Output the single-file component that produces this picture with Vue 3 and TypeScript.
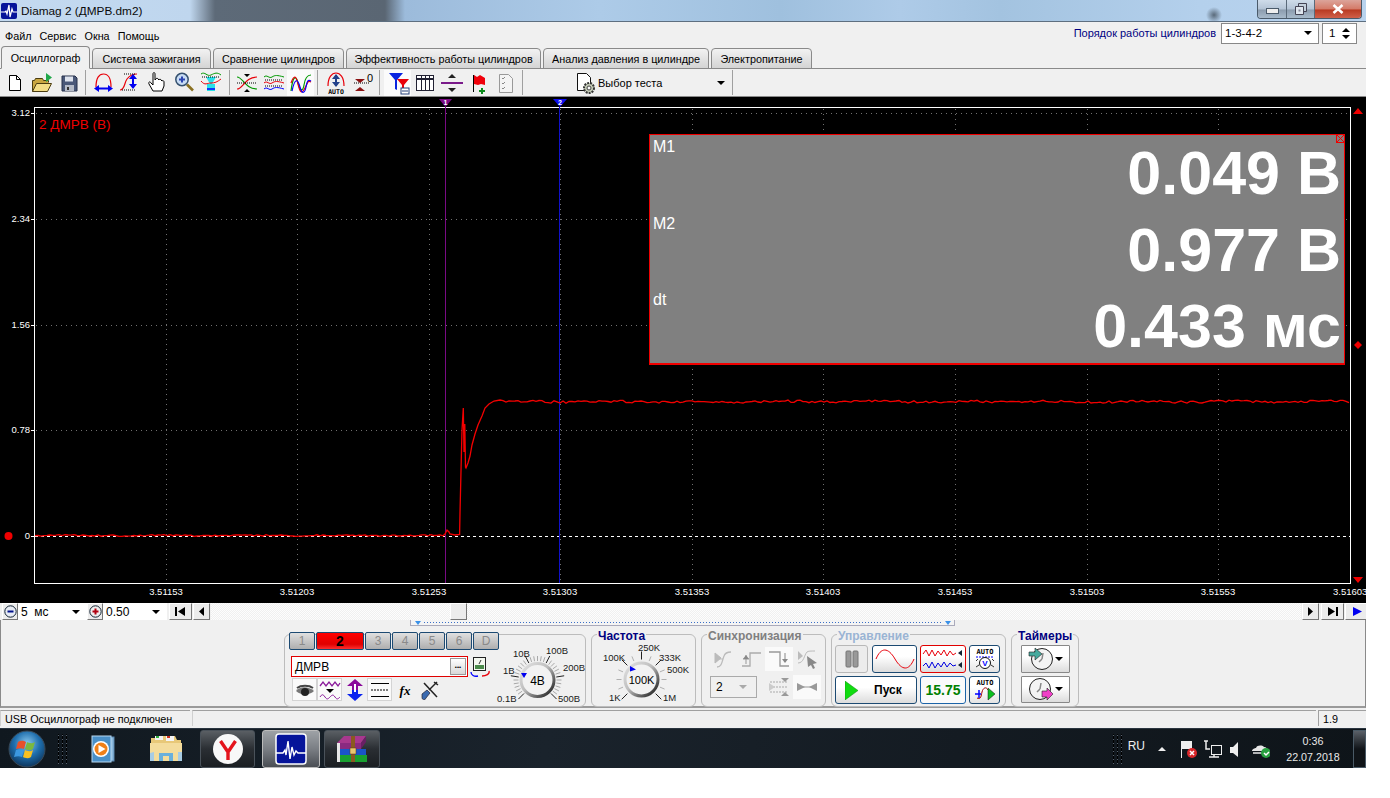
<script setup lang="ts">
import { computed } from 'vue'

const tabs = [
  { label: 'Осциллограф', width: 89, active: true },
  { label: 'Система зажигания', width: 119 },
  { label: 'Сравнение цилиндров', width: 131 },
  { label: 'Эффективность работы цилиндров', width: 195 },
  { label: 'Анализ давления в цилиндре', width: 166 },
  { label: 'Электропитание', width: 101 }
]

const toolGroups = [
  { start: 1, end: 0, items: ['newDoc', 'open', 'save'] },
  { start: 3, end: 2, items: ['arcWidth', 'sWave', 'hand', 'zoom', 'fit'] },
  { start: 3, end: 0, items: ['cross', 'stack', 'overlay'] },
  { start: 4, end: 0, items: ['auto', 'zero'] },
  { start: 4, end: 0, items: ['filter', 'table', 'split', 'flag', 'note'] }
]
const activeTools = ['overlay', 'filter']

const channels = ['1', '2', '3', '4', '5', '6', 'D']
const channelTools = ['eye', 'waveMenu', 'updown', 'lines', 'fx', 'tools']

const yLabels = [
  { y: 113, text: '3.12' },
  { y: 219, text: '2.34' },
  { y: 325, text: '1.56' },
  { y: 430, text: '0.78' },
  { y: 536, text: '0' }
]
const xLabels = [166, 297, 429, 560, 692, 823, 955, 1087, 1218].map((x, i) => ({
  x,
  text: (3.51153 + i * 0.0005).toFixed(5)
}))

const readings = [
  { name: 'M1', value: '0.049 В' },
  { name: 'M2', value: '0.977 В' },
  { name: 'dt', value: '0.433 мс' }
]

const rnd = (i: number) => {
  const s = Math.sin(i * 12.9898) * 43758.5453
  return s - Math.floor(s)
}
const noise = (i: number) => (rnd(i) - 0.5) * 2.4 + Math.sin(i * 0.07) * 0.4

const signal = computed(() => {
  const pts: string[] = []
  for (let x = 35; x < 444; x += 3) pts.push(`${x},${(535.4 + noise(x) * 0.6).toFixed(1)}`)
  const rise = [
    [445, 534], [447, 530], [449, 532], [450, 534], [455, 535], [459.6, 534.5], [460, 513], [461, 471],
    [462, 430], [463.3, 408], [464, 452], [464.8, 424], [465.5, 467], [466, 468], [468, 463], [470, 456],
    [472, 445], [475, 434], [478, 425], [482, 416], [485, 408], [489, 404], [494, 401], [500, 400]
  ]
  rise.forEach(p => pts.push(p.join(',')))
  for (let x = 503; x <= 1350; x += 3) pts.push(`${x},${(401.6 + noise(x)).toFixed(1)}`)
  return pts.join(' ')
})

interface Tick { x1: number; y1: number; x2: number; y2: number; major: boolean }

function ticks(cx: number, cy: number, count: number, r1: number, r2: number, majors: number[]): Tick[] {
  const out: Tick[] = []
  for (let i = 0; i < count; i++) {
    const a = ((-225 + (270 * i) / (count - 1)) * Math.PI) / 180
    const major = majors.includes(i)
    const r = major ? r2 + 3 : r2
    out.push({
      x1: cx + Math.cos(a) * r1,
      y1: cy + Math.sin(a) * r1,
      x2: cx + Math.cos(a) * r,
      y2: cy + Math.sin(a) * r,
      major
    })
  }
  return out
}

const voltTicks = ticks(537.5, 680, 31, 19, 24, [0, 6, 12, 18, 24, 30])
const freqTicks = ticks(641.5, 680.5, 13, 20, 25, [0, 4, 6, 8, 12])

const voltLabels = [
  { x: 497, y: 702, t: '0.1В' }, { x: 503, y: 674, t: '1В' }, { x: 513, y: 657, t: '10В' },
  { x: 546, y: 654, t: '100В' }, { x: 563, y: 671, t: '200В' }, { x: 558, y: 702, t: '500В' }
]
const freqLabels = [
  { x: 609, y: 702, t: '1K' }, { x: 603, y: 662, t: '100K' }, { x: 638, y: 652, t: '250K' },
  { x: 659, y: 662, t: '333K' }, { x: 667, y: 674, t: '500K' }, { x: 663, y: 702, t: '1M' }
]

const syncIcons = ['syncRise', 'syncStep', 'syncFall', 'syncCursor']

const red = '#e8000a'
const blue = '#0000f0'
const vArrow = (x: number, y1: number, y2: number, c: string) =>
  `<path d="M${x} ${y1}v${y2 - y1}" stroke="${c}" stroke-width="2"/><path d="M${x - 4} ${y1 + 4}l4-5 4 5zM${x - 4} ${y2 - 4}l4 5 4-5z" fill="${c}"/>`

const icons: Record<string, string> = {
  newDoc: '<path d="M6.500 4.500h7l4 4v11h-11z" fill="#fff" stroke="#000"/><path d="M13.500 4.500v4h4" fill="none" stroke="#000"/>',
  open: '<path d="M2.500 20.500v-11h2l1-2h7l1 2h5v2" fill="#c9a640" stroke="#4a3c10"/><path d="M2.500 20.500l4-8h15l-4 8z" fill="#f3dd86" stroke="#4a3c10"/><path d="M16 2l6 4.500-6 4.500z" fill="#21a84a"/>',
  save: '<path d="M5 5h13l2 2v13H5z" fill="#4a5878" stroke="#26304a"/><rect x="8" y="5.500" width="8" height="5" fill="#dfe4ee"/><rect x="8" y="14" width="9" height="6" fill="#b6bcc8"/><rect x="10" y="16" width="2" height="3" fill="#333"/>',
  arcWidth: `<path d="M5 16C5 7 8 3 12.500 3S20 7 20 16" fill="none" stroke="${red}" stroke-width="1.200"/><path d="M6 17.500h13" stroke="${blue}" stroke-width="2"/><path d="M8 14l-5 3.500 5 3.500zM17 14l5 3.500-5 3.500z" fill="${blue}"/>`,
  sWave: `<path d="M2 19c5 0 4-7 7-11 3-4 6-5 10-5" fill="none" stroke="${red}" stroke-width="1.200"/><path d="M6 3h12M4 19h14" stroke="#000" stroke-dasharray="1 1"/>${vArrow(15, 4, 17, blue)}`,
  hand: '<path d="M8 20l-4-7c-1-2 1-3 2-1l2 2V3c0-2 2-2 2 0v6l1-1c0-1 2-1 2 0l1 1c0-1 2-1 2 0l1 1c1-1 2 0 2 1v4l-2 5z" fill="#fff" stroke="#000"/>',
  zoom: '<circle cx="10" cy="8.500" r="6.200" fill="#c8dcf4" stroke="#34506e" stroke-width="1.500"/><path d="M10 5.500v6M7 8.500h6" stroke="#2a44b0" stroke-width="2"/><path d="M15 13.500l6 6" stroke="#8a7020" stroke-width="2.600"/>',
  fit: '<path d="M7 6l4 7h2l4-7z" fill="#29e0e8"/><rect x="8" y="13" width="8" height="7" fill="#29e0e8"/><path d="M2 3c4-3 6 3 10 1s6-3 10 0" fill="none" stroke="#090"/><path d="M2 10c4 5 6 2 10 2s6-1 10-4" fill="none" stroke="#e8000a"/><path d="M3 6h18" stroke="#000" stroke-dasharray="1 1"/><path d="M8 18h8" stroke="#00f" stroke-width="1.500"/>',
  cross: '<path d="M2 6c6 0 8 12 20 12" fill="none" stroke="#090" stroke-width="1.200"/><path d="M2 18C8 18 10 6 22 6" fill="none" stroke="#e8000a" stroke-width="1.200"/><path d="M2 12h20" stroke="#000" stroke-dasharray="1 1"/><path d="M9 3h6l-3 3zM9 21h6l-3-3z" fill="#000"/>',
  stack: '<path d="M2 6c3-3 5 2 8 0s5-2 12 0" fill="none" stroke="#090"/><path d="M2 12c3-3 5 2 8 0s5-2 12 0" fill="none" stroke="#e8000a"/><path d="M2 18c3-3 5 2 8 0s5-2 12 0" fill="none" stroke="#00f"/><path d="M3 9h18M3 15h18" stroke="#000" stroke-dasharray="1 1"/>',
  overlay: '<path d="M2 20C4 4 7 4 9 12s5 9 6 2 3-10 7-10" fill="none" stroke="#090" stroke-width="1.200"/><path d="M2 12c3-8 5-8 7 1s4 10 7 4 3-8 6-6" fill="none" stroke="#e8000a" stroke-width="1.200"/><path d="M3 20C6 6 9 8 11 16s5 6 6 0 2-8 5-6" fill="none" stroke="#00f" stroke-width="1.200"/>',
  auto: `<path d="M4 15C4 6 8 2 12 2s8 4 8 13" fill="none" stroke="${red}" stroke-width="1.200"/>${vArrow(12, 4, 15, '#22408a')}<text x="12" y="23" font-size="6.500" font-weight="700" text-anchor="middle" font-family="DejaVu Sans Mono, monospace">AUTO</text>`,
  zero: '<path d="M3 12h16" stroke="#000" stroke-dasharray="1 1"/><path d="M4 8h10l-5 4zM4 20h10l-5-4z" fill="#8a1010"/><text x="19" y="11" font-size="11" text-anchor="middle" font-family="Liberation Sans, sans-serif">0</text>',
  filter: '<path d="M3 2h14l-6 7v10l-2-1V9z" fill="#0a24e0"/><path d="M11 8h12l-5 6v7l-2-1v-6z" fill="#e8000a"/><rect x="15" y="17" width="8" height="6" fill="#fff" stroke="#24407a"/><path d="M16 20h6" stroke="#24407a"/>',
  table: '<rect x="3.500" y="4.500" width="17" height="15" fill="#fff" stroke="#223"/><path d="M3.500 8h17" stroke="#223" stroke-width="2"/><path d="M8.500 5v14M12.500 5v14M16.500 5v14" stroke="#223"/>',
  split: '<path d="M1 12h22" stroke="#7a1a8a" stroke-width="2"/><path d="M8 7h8l-4-4zM8 17h8l-4 4z" fill="#222"/>',
  flag: '<path d="M6.500 4v17" stroke="#000"/><path d="M7 4l3 2 3-2 5 3v7l-4-1-3 1-4-1z" fill="#f0000a"/><path d="M15 17v6M12 20h6" stroke="#0a8a1a" stroke-width="2"/>',
  note: '<path d="M5.500 3.500h9l4 4v14h-13z" fill="#f4f4f4" stroke="#999"/><path d="M8 7l1 1 2-2M8 12l1 1 2-2M8 17l1 1 2-2" stroke="#888" fill="none"/>',
  testDoc: '<path d="M3.500 2.500h9l4 4v13h-13z" fill="#fff" stroke="#111"/><circle cx="15" cy="17" r="5" fill="#c5ccb8" stroke="#333" stroke-dasharray="2 1" stroke-width="2"/><circle cx="15" cy="17" r="2" fill="#fff" stroke="#444"/>',
  scale: '<rect x="3.500" y="2.500" width="12" height="13" fill="#f4f8f0" stroke="#222"/><rect x="5" y="10" width="9" height="4" fill="#4a8a4a"/><path d="M9 9l2-4" stroke="#333"/><path d="M1 17c0 3 3 5 7 4" fill="none" stroke="#00f" stroke-width="1.300"/><path d="M19 16c1 3-3 5-7 5" fill="none" stroke="#e8000a" stroke-width="1.300"/>',
  eye: '<path d="M3 13c4-5 12-5 18 0-4 4-13 5-18 0z" fill="#777"/><circle cx="12" cy="14" r="4" fill="#222"/><path d="M4 10c4-3 12-3 16 0" stroke="#444" stroke-width="2" fill="none"/>',
  waveMenu: '<path d="M2 8l3-4 3 4 3-4 3 4 3-4 3 4 2-3" fill="none" stroke="#8a1a9a" stroke-width="1.300"/><path d="M2 19c2-3 3-3 5 0s3 2 5 0 3-3 5 0 3 2 5 0" fill="none" stroke="#8a1a9a"/><path d="M8 11h8l-4 4z" fill="#000"/>',
  updown: '<path d="M12 1l8 7h-5v4H9V8H4z" fill="#8a0a9a"/><path d="M12 23l8-7h-5v-4H9v4H4z" fill="#0a24f0"/><path d="M11 6h2v8h-2z" fill="#fff"/>',
  lines: '<path d="M3 5.500h18M3 18.500h18" stroke="#000" stroke-width="1.200"/><path d="M3 12h18" stroke="#000" stroke-dasharray="2 1"/>',
  fx: '<text x="12" y="17" font-size="13" font-weight="700" font-style="italic" text-anchor="middle" font-family="Liberation Serif, serif">fx</text>',
  tools: '<path d="M6 5l13 14" stroke="#222" stroke-width="1.500"/><path d="M19 4l-8 8" stroke="#222" stroke-width="1.500"/><path d="M4 16l5-4 3 3-4 5a2 2 0 0 1-4-1z" fill="#3a6ab0" stroke="#223" stroke-width=".7"/><path d="M16 4l4 3" stroke="#222" stroke-width="1.500"/>',
  syncRise: '<path d="M4 6l6 5-6 5zM4 12h8" fill="#bbb" stroke="#bbb"/><path d="M6 20c5 0 5-6 7-11 1-3 4-4 7-4" fill="none" stroke="#bbb" stroke-width="1.300"/>',
  syncStep: '<path d="M3 19h8V6h11" fill="none" stroke="#aaa" stroke-width="1.300"/><path d="M7 8v9M4 12h6" stroke="#999"/><path d="M4 12l3-4 3 4z" fill="#888"/>',
  syncFall: '<path d="M2 5h11v14h9" fill="none" stroke="#999" stroke-width="1.300"/><path d="M18 6v9" stroke="#888"/><path d="M15 12l3 4 3-4z" fill="#888"/>',
  syncCursor: '<path d="M3 16c6 0 6-8 9-11 1-1 4-1 8-1" fill="none" stroke="#bbb"/><path d="M3 4l5 5-5 4z" fill="#bbb"/><path d="M12 9l10 7-4 1 2 4-2 1-2-4-3 2z" fill="#888"/>',
  syncIn: '<path d="M3 7l18 0M3 12h18M3 17h18" stroke="#aaa" stroke-dasharray="2 1"/><path d="M14 3h8l-4 4zM14 21h8l-4-4z" fill="#999"/><path d="M2 8l6 4-6 4z" fill="#ccc"/>',
  syncOut: '<path d="M2 8l8 4-8 4zM22 8l-8 4 8 4z" fill="#999"/><path d="M2 12h20" stroke="#999"/>',
  pause: '<rect x="6" y="4" width="5" height="16" rx="1" fill="#999" stroke="#777"/><rect x="13" y="4" width="5" height="16" rx="1" fill="#999" stroke="#777"/>',
  autoV: '<text x="12" y="7" font-size="7" font-weight="700" text-anchor="middle" font-family="DejaVu Sans Mono, monospace">AUTO</text><path d="M3 10h18" stroke="#00f" stroke-dasharray="2 1"/><circle cx="12" cy="16" r="5.500" fill="#fff" stroke="#111"/><text x="12" y="19" font-size="8" fill="#00f" font-weight="700" text-anchor="middle" font-family="Liberation Sans, sans-serif">V</text><path d="M3 14l2-2M21 14l-2-2M3 20l3-2M21 20l-3-2" stroke="#333"/>',
  autoRun: '<text x="12" y="7" font-size="7" font-weight="700" text-anchor="middle" font-family="DejaVu Sans Mono, monospace">AUTO</text><path d="M2 16h6M6 12v8" stroke="#00f" stroke-width="1.500"/><path d="M4 20c4 2 4-2 5-6s4-6 6-2" fill="none" stroke="#a00000"/><path d="M15 10l7 6-7 6z" fill="#0cc020" stroke="#111" stroke-width=".5"/>',
  timerIn: '<circle cx="13" cy="12" r="10.500" fill="#f4f4f4" stroke="#222"/><path d="M13 12l1-6M13 12l-3 3" stroke="#888" stroke-width="1.500"/><path d="M0 5h6V1l7 6-7 6V9H0z" fill="#46aa9e" stroke="#222" stroke-width=".6"/>',
  timerOut: '<circle cx="11" cy="12" r="10.500" fill="#f4f4f4" stroke="#222"/><path d="M11 12l1-6M11 12l-3 3" stroke="#888" stroke-width="1.500"/><path d="M13 14h5v-3l6 6-6 6v-3h-5z" fill="#f040c8" stroke="#222" stroke-width=".6"/>'
}

const trayIcons = {
  flag: '<path d="M3.500 3v17" stroke="#eee"/><path d="M4 3h10v8H4z" fill="#eee"/><circle cx="14" cy="15" r="5" fill="#d8262a"/><path d="M12 13l4 4M16 13l-4 4" stroke="#fff" stroke-width="1.500"/>',
  net: '<rect x="9.500" y="7.500" width="10" height="9" fill="none" stroke="#eee"/><path d="M4 3v8h4M2 3h4M7 19h10M12 16v3" stroke="#eee" stroke-width="1.500" fill="none"/>',
  vol: '<path d="M4 9h3l5-5v15l-5-4H4z" fill="#eee"/>',
  cloud: '<path d="M2 13c0-2 3-3 4-3 1-3 6-3 8-1 2 0 4 2 4 4H2z" fill="#e8e8e8"/><path d="M3 15h13" stroke="#e8e8e8" stroke-width="1.500"/><circle cx="16" cy="15" r="5" fill="#28a040"/><path d="M14 15l2 2 3-3" stroke="#fff" fill="none" stroke-width="1.500"/>'
}
</script>

<template>
  <div class="window">
    <header class="titlebar">
      <svg class="app-icon" viewBox="0 0 16 16">
        <rect width="16" height="16" rx="2" fill="#06149a" />
        <path d="M0 9h4l1-1 1 3 2-9 1 12 2-8 1 3h4" fill="none" stroke="#fff" stroke-width="1.200" />
      </svg>
      <span class="title">Diamag 2 (ДМРВ.dm2)</span>
      <div class="win-btns">
        <span class="win-btn win-min"><i></i></span>
        <span class="win-btn win-max">
          <svg width="12" height="12" viewBox="0 0 12 12">
            <path d="M3.500.5h8v8h-8z" fill="#c4d0dc" stroke="#445" />
            <path d="M.5 3.500h8v8h-8z" fill="#dfe6ee" stroke="#445" />
            <path d="M3.500 6.500h2v2h-2z" fill="#889" />
          </svg>
        </span>
        <span class="win-btn win-close">
          <svg width="14" height="10" viewBox="0 0 14 10">
            <path d="M2.500 1l9 8M11.500 1l-9 8" stroke="#fff" stroke-width="2.600" />
          </svg>
        </span>
      </div>
    </header>

    <div class="menubar">
      <nav class="menu">
        <span>Файл</span>
        <span>Сервис</span>
        <span>Окна</span>
        <span>Помощь</span>
      </nav>
      <div class="order">
        <span class="order-label">Порядок работы цилиндров</span>
        <span class="order-combo">1-3-4-2<i class="arrow"></i></span>
        <span class="order-spin">1
          <span class="spin-arrows"><i class="up"></i><i class="arrow"></i></span>
        </span>
      </div>
    </div>

    <div class="tabs">
      <span
        v-for="tab in tabs"
        :key="tab.label"
        class="tab"
        :class="{ 'tab--active': tab.active }"
        :style="{ width: tab.width + 'px' }"
      >{{ tab.label }}</span>
    </div>

    <div class="toolbar">
      <template v-for="group in toolGroups" :key="group.items[0]">
        <div class="tool-group" :style="{ paddingLeft: group.start + 'px', paddingRight: group.end + 'px' }">
          <span
            v-for="name in group.items"
            :key="name"
            class="tool"
            :class="{ 'tool--on': activeTools.includes(name) }"
          >
            <svg class="ico" viewBox="0 0 24 24" v-html="icons[name]"></svg>
          </span>
        </div>
        <i class="sep"></i>
      </template>
      <div class="test-select">
        <svg class="ico" viewBox="0 0 24 24" v-html="icons.testDoc"></svg>
        <span>Выбор теста</span>
        <i class="arrow"></i>
      </div>
      <i class="sep"></i>
    </div>

    <section class="scope">
      <svg class="plot" viewBox="0 97 1366 506" width="1366" height="506">
        <rect x="34.500" y="107.500" width="1316" height="476" fill="none" stroke="#fff" />
        <g stroke="#707070" stroke-dasharray="1 4" shape-rendering="crispEdges">
          <line v-for="l in yLabels.slice(0, 4)" :key="l.y" x1="36" x2="1350" :y1="l.y" :y2="l.y" />
          <line v-for="l in xLabels" :key="l.x" :x1="l.x" :x2="l.x" y1="109" y2="583" />
        </g>
        <g stroke="#fff" shape-rendering="crispEdges">
          <line v-for="l in yLabels" :key="l.y" x1="31" x2="34" :y1="l.y" :y2="l.y" />
        </g>
        <line x1="35" x2="1350" y1="536.500" y2="536.500" stroke="#fff" stroke-dasharray="3 3" />
        <text
          v-for="l in yLabels"
          :key="l.text"
          class="axis"
          x="30"
          :y="l.y + 3"
          text-anchor="end"
        >{{ l.text }}</text>
        <text v-for="l in xLabels" :key="l.text" class="axis" :x="l.x" y="595" text-anchor="middle">{{ l.text }}</text>
        <text class="axis" x="1333" y="595">3.51603</text>
        <text class="channel-name" x="39" y="129">2 ДМРВ (В)</text>

        <line x1="445.500" x2="445.500" y1="107" y2="583" stroke="#7a0a84" />
        <line x1="559.500" x2="559.500" y1="107" y2="583" stroke="#1010c8" />
        <path d="M439 99h13l-6.500 8z" fill="#7a0a84" />
        <path d="M553 99h14l-7 8z" fill="#1010f0" />
        <text class="marker" x="445.500" y="105" text-anchor="middle">1</text>
        <text class="marker" x="560" y="105" text-anchor="middle">2</text>

        <polyline :points="signal" fill="none" stroke="#f40000" stroke-width="1.300" />

        <circle cx="8.500" cy="536" r="4" fill="#f00000" />
        <path d="M1353 114l5-6 5 6zM1353 577l5 6 5-6zM1354 345l4-4 4 4-4 4z" fill="#f00000" />
      </svg>

      <div class="readout">
        <i class="readout-close">
          <svg width="7" height="7" viewBox="0 0 7 7">
            <path d="M0 0l7 7M7 0L0 7" stroke="#f00000" />
          </svg>
        </i>
        <div v-for="r in readings" :key="r.name" class="reading">
          <span class="reading-name">{{ r.name }}</span>
          <span class="reading-value">{{ r.value }}</span>
        </div>
      </div>
    </section>

    <div class="scrollrow">
      <button class="sbtn zoom-btn"><svg width="13" height="13" viewBox="0 0 13 13"><circle cx="6.500" cy="6.500" r="5.700" fill="#e8ecf4" stroke="#123" /><path d="M3.500 6.500h6" stroke="#00108a" stroke-width="2" /></svg></button>
      <span class="combo combo--time">5&nbsp; мс<i class="arrow"></i></span>
      <button class="sbtn zoom-btn"><svg width="13" height="13" viewBox="0 0 13 13"><circle cx="6.500" cy="6.500" r="5.700" fill="#eee" stroke="#123" /><path d="M3.500 6.500h6M6.500 3.500v6" stroke="#b00010" stroke-width="2" /></svg></button>
      <span class="combo combo--scale">0.50<i class="arrow"></i></span>
      <button class="sbtn nav-wide"><svg width="11" height="9" viewBox="0 0 11 9"><path d="M0 0h2v9H0zM10 0v9L3 4.500z" /></svg></button>
      <button class="sbtn nav-thin"><svg width="5" height="9" viewBox="0 0 5 9"><path d="M5 0v9L0 4.500z" /></svg></button>
      <div class="track"><span class="thumb"></span></div>
      <button class="sbtn nav-thin"><svg width="5" height="9" viewBox="0 0 5 9"><path d="M0 0v9l5-4.500z" /></svg></button>
      <button class="sbtn nav-wide"><svg width="11" height="9" viewBox="0 0 11 9"><path d="M11 0H9v9h2zM1 0v9l7-4.500z" /></svg></button>
      <button class="sbtn nav-play"><svg width="9" height="9" viewBox="0 0 9 9"><path d="M0 0v9l9-4.500z" fill="#0000f0" /></svg></button>
    </div>

    <div class="controls">
      <div class="strip"><i class="strip-mark"></i><span class="strip-dots"></span><i class="strip-mark"></i></div>
      <div class="groups">
        <div class="group group--channel">
          <div class="channel-left">
            <div class="channel-btns">
              <span
                v-for="c in channels"
                :key="c"
                class="channel"
                :class="{ 'channel--on': c === '2' }"
              >{{ c }}</span>
            </div>
            <div class="name-row">
              <div class="name-field">
                <span>ДМРВ</span>
                <button class="dots">•••</button>
              </div>
              <svg class="ico name-ico" viewBox="0 0 24 24" v-html="icons.scale"></svg>
            </div>
            <div class="channel-tools">
              <span
                v-for="t in channelTools"
                :key="t"
                class="ctool"
                :class="{ 'ctool--on': ['eye', 'waveMenu', 'lines'].includes(t) }"
              >
                <svg class="ico" viewBox="0 0 24 24" v-html="icons[t]"></svg>
              </span>
            </div>
          </div>
          <svg class="knob knob--volt" viewBox="503 644 82 63" width="82" height="63">
            <defs>
              <linearGradient id="ring" x1="0" y1="0" x2="1" y2="1">
                <stop offset="0" stop-color="#e4e4e4" />
                <stop offset="0.45" stop-color="#bdbdbd" />
                <stop offset="1" stop-color="#111" />
              </linearGradient>
            </defs>
            <line
              v-for="(t, i) in voltTicks"
              :key="i"
              :x1="t.x1"
              :y1="t.y1"
              :x2="t.x2"
              :y2="t.y2"
              :stroke="t.major ? '#222' : '#a8a8a8'"
            />
            <circle cx="537.500" cy="680" r="16.500" fill="#f2f2f2" stroke="url(#ring)" stroke-width="3" />
            <path d="M521 673h6l-3 5z" fill="#0000f0" />
            <text x="537.500" y="685" class="knob-value" text-anchor="middle">4В</text>
            <text v-for="l in voltLabels" :key="l.t" class="knob-label" :x="l.x" :y="l.y">{{ l.t }}</text>
          </svg>
        </div>

        <div class="group group--freq">
          <span class="group-title title--navy">Частота</span>
          <svg class="knob knob--freq" viewBox="592 644 102 63" width="102" height="63">
            <line
              v-for="(t, i) in freqTicks"
              :key="i"
              :x1="t.x1"
              :y1="t.y1"
              :x2="t.x2"
              :y2="t.y2"
              :stroke="t.major ? '#222' : '#b0b0b0'"
            />
            <circle cx="641.500" cy="680.500" r="16.500" fill="#f2f2f2" stroke="url(#ring)" stroke-width="3" />
            <path d="M630 667l6 3.500-6 2z" fill="#0000f0" />
            <text x="641.500" y="685" class="knob-value knob-value--small" text-anchor="middle">100K</text>
            <text v-for="l in freqLabels" :key="l.t" class="knob-label" :x="l.x" :y="l.y">{{ l.t }}</text>
          </svg>
        </div>

        <div class="group group--sync">
          <span class="group-title title--gray">Синхронизация</span>
          <div class="sync-grid">
            <span
              v-for="s in syncIcons"
              :key="s"
              class="sync-cell"
              :class="{ 'sync-cell--on': s === 'syncFall' }"
            >
              <svg class="ico" viewBox="0 0 24 24" v-html="icons[s]"></svg>
            </span>
            <span class="sync-combo">2<i class="arrow arrow--gray"></i></span>
            <span class="sync-cell"><svg class="ico" viewBox="0 0 24 24" v-html="icons.syncIn"></svg></span>
            <span class="sync-cell sync-cell--on"><svg class="ico" viewBox="0 0 24 24" v-html="icons.syncOut"></svg></span>
          </div>
        </div>

        <div class="group group--run">
          <span class="group-title title--pale">Управление</span>
          <div class="run-grid">
            <span class="rbtn rbtn--flat"><svg class="ico" viewBox="0 0 24 24" v-html="icons.pause"></svg></span>
            <span class="rbtn">
              <svg width="40" height="20" viewBox="0 0 40 20"><path d="M1 10C6-2 13-2 20 10s14 12 19 0" fill="none" stroke="#e8000a" /></svg>
            </span>
            <span class="rbtn rbtn--red">
              <svg width="42" height="24" viewBox="0 0 42 24">
                <path d="M1 7l3-4 3 6 3-6 3 6 3-5 3 4 3-5 3 6 3-5 3 4 3-2" fill="none" stroke="#e8000a" />
                <path d="M1 19l3-3 3 5 3-6 3 6 3-5 3 4 3-5 3 5 3-4 3 3 3-1" fill="none" stroke="#0000e0" />
                <path d="M40 3v6l-4-3zM40 15v6l-4-3z" fill="#123" />
              </svg>
            </span>
            <span class="rbtn rbtn--small"><svg class="ico" viewBox="0 0 24 24" v-html="icons.autoV"></svg></span>
            <span class="rbtn rbtn--start">
              <svg width="13" height="19" viewBox="0 0 13 19"><path d="M0 0l13 9.500L0 19z" fill="#10dc10" stroke="#0a8a0a" stroke-width=".5" /></svg>
              <b>Пуск</b>
            </span>
            <span class="rbtn rbtn--value">15.75</span>
            <span class="rbtn rbtn--small"><svg class="ico" viewBox="0 0 24 24" v-html="icons.autoRun"></svg></span>
          </div>
        </div>

        <div class="group group--timers">
          <span class="group-title title--navy">Таймеры</span>
          <span class="tbtn"><svg class="ico" viewBox="0 0 24 24" v-html="icons.timerIn"></svg><i class="arrow"></i></span>
          <span class="tbtn"><svg class="ico" viewBox="0 0 24 24" v-html="icons.timerOut"></svg><i class="arrow"></i></span>
        </div>
      </div>
    </div>

    <footer class="status">
      <span class="status-cell status-cell--main">USB Осциллограф не подключен</span>
      <span class="status-cell status-cell--fill"></span>
      <span class="status-cell status-cell--ver">1.9</span>
    </footer>

    <div class="taskbar">
      <div class="orb">
        <svg width="38" height="38" viewBox="0 0 38 38">
          <defs>
            <radialGradient id="orbFill" cx="0.5" cy="0.35" r="0.7">
              <stop offset="0" stop-color="#8ac8ee" />
              <stop offset="0.5" stop-color="#1f6fae" />
              <stop offset="1" stop-color="#0a2c50" />
            </radialGradient>
          </defs>
          <circle cx="19" cy="19" r="18" fill="url(#orbFill)" stroke="#3a4a58" />
          <path d="M10 12c3-2 6-1 8 0l-2 7c-2-1-5-1-8 0z" fill="#e8502a" />
          <path d="M19 12c2 1 5 2 8 0l-2 7c-3 2-6 1-8 0z" fill="#7ab840" />
          <path d="M8 20c3-1 5-1 8 0l-2 7c-2-1-5-1-8 0z" fill="#3c98e0" />
          <path d="M17 20c2 1 5 2 8 0l-2 7c-3 2-6 1-8 0z" fill="#f8c020" />
        </svg>
      </div>
      <i class="grip"></i>
      <span class="task task--plain task--media">
        <svg width="32" height="32" viewBox="0 0 32 32">
          <rect x="11" y="4" width="18" height="24" fill="#8ab8dc" stroke="#5a88b0" />
          <rect x="7" y="3" width="19" height="26" fill="#4a90c8" stroke="#b8d8f0" />
          <circle cx="16" cy="16" r="8" fill="#fff" />
          <circle cx="16" cy="16" r="6.500" fill="#f08018" />
          <path d="M13.500 12l7 4-7 4z" fill="#fff" />
        </svg>
      </span>
      <span class="task task--plain task--folder">
        <svg width="34" height="32" viewBox="0 0 34 32">
          <path d="M2 5h10l2-2h12l2 4h4v20H2z" fill="#e8c878" />
          <rect x="6" y="3" width="8" height="4" fill="#f4f4f4" />
          <rect x="7" y="3" width="3" height="2" fill="#30b040" />
          <rect x="17" y="3" width="8" height="5" fill="#f4f4f4" />
          <rect x="18" y="3" width="3" height="2" fill="#d03020" />
          <path d="M1 10h32v18H1z" fill="#f4dc9c" />
          <path d="M10 28v-8h14v8h-4v-5h-6v5z" fill="#6ab0dc" />
          <path d="M1 28v-8l4-1v9z M33 28v-9h-4v9z" fill="#a8cce4" />
        </svg>
      </span>
      <span class="task task--btn task--yandex">
        <svg width="32" height="32" viewBox="0 0 32 32">
          <circle cx="16" cy="16" r="15" fill="#f8f8f8" />
          <path d="M8.500 8l7.500 11v8M23.500 8L16 19" fill="none" stroke="#e4141c" stroke-width="3.400" />
        </svg>
      </span>
      <span class="task task--btn task--active task--diamag">
        <svg width="32" height="32" viewBox="0 0 32 32">
          <rect x="1" y="1" width="30" height="30" rx="3" fill="#06149a" stroke="#fff" stroke-width="1.500" />
          <path d="M1 20h7l2-3 1 5 2-14 2 18 2-12 2 8 2-4 2 2h8" fill="none" stroke="#fff" stroke-width="1.400" />
        </svg>
      </span>
      <span class="task task--btn task--rar">
        <svg width="34" height="32" viewBox="0 0 34 32">
          <path d="M2 10l7-7h22l-5 7z" fill="#a8388e" />
          <path d="M2 10h24v6H2z" fill="#8a2a80" />
          <path d="M26 10l5-7v6l-5 7z" fill="#6a1f64" />
          <path d="M2 16h29v6H2z" fill="#1a54c8" />
          <path d="M2 22h30v7H2z" fill="#18a030" />
          <path d="M2 16h3v13H2zM2 10h3v6H2z" fill="#e8e8e8" />
          <path d="M16 3h4v26h-4z" fill="#8a5a20" />
          <rect x="15" y="15" width="6" height="6" fill="#e8c870" stroke="#5a3a10" stroke-width=".5" />
        </svg>
      </span>
      <div class="tray">
        <i class="grip"></i>
        <span class="lang">RU</span>
        <i class="tray-up"></i>
        <svg class="tray-ico" viewBox="0 0 20 22" v-html="trayIcons.flag"></svg>
        <svg class="tray-ico" viewBox="0 0 20 22" v-html="trayIcons.net"></svg>
        <svg class="tray-ico" viewBox="0 0 20 22" v-html="trayIcons.vol"></svg>
        <svg class="tray-ico" viewBox="0 0 20 22" v-html="trayIcons.cloud"></svg>
        <div class="clock">
          <span>0:36</span>
          <span>22.07.2018</span>
        </div>
        <i class="show-desktop"></i>
      </div>
    </div>
  </div>
</template>

<style>
html, body {
  background: #fff;
}
</style>

<style scoped>
.window {
  width: 1366px;
  height: 768px;
  display: flex;
  flex-direction: column;
  background: #f0f0f0;
  font-family: "Liberation Sans", Arial, sans-serif;
  font-size: 10.800px;
  color: #000;
  overflow: hidden;
}
i {
  display: block;
  font-style: normal;
}
button {
  padding: 0;
  margin: 0;
  font: inherit;
}
.ico {
  width: 24px;
  height: 24px;
  display: block;
  overflow: visible;
}
.arrow {
  width: 0;
  height: 0;
  border-left: 4px solid transparent;
  border-right: 4px solid transparent;
  border-top: 4px solid #000;
}
.arrow--gray {
  border-top-color: #aaa;
}

/* title bar */
.titlebar {
  height: 21px;
  flex: none;
  display: flex;
  align-items: center;
  border-bottom: 1px solid #5e6f80;
  background:
    radial-gradient(circle 8px at 1214px 15px, #5a6a7a, transparent),
    linear-gradient(90deg, #c4daf0 0, #bfd6ee 190px, #5d6a78 215px, #5a6673 385px, #9cbbdb 405px, #adcbe8 600px, #9fc0de 780px, #aecbe8 900px, #a3c3e0 1000px, #b4d0ec 1200px, #b9d3ee 1366px);
}
.app-icon {
  width: 16px;
  height: 16px;
  margin-left: 1px;
  flex: none;
}
.title {
  margin-left: 4px;
  font-size: 11.800px;
  color: #0a0a0a;
}
.win-btns {
  margin-left: auto;
  margin-right: 4px;
  margin-top: -3px;
  display: flex;
  height: 18px;
  border: 1px solid #4a5a6a;
  border-top: none;
  border-radius: 0 0 4px 4px;
  overflow: hidden;
}
.win-btn {
  display: flex;
  align-items: center;
  justify-content: center;
  border-left: 1px solid #5a6a7a;
  background: linear-gradient(#cfdcea, #b4c4d6 50%, #8c9cae 55%, #a8bacb);
}
.win-min {
  width: 28px;
  border-left: none;
}
.win-min i {
  width: 11px;
  height: 4px;
  margin-top: 4px;
  background: #eee;
  border: 1px solid #4a5a6a;
}
.win-max {
  width: 27px;
}
.win-close {
  width: 46px;
  background: linear-gradient(#dca49a, #d47a68 50%, #b83a22 55%, #d0604a);
}

/* menu */
.menubar {
  height: 24px;
  flex: none;
  display: flex;
  align-items: center;
  justify-content: space-between;
}
.menu {
  display: flex;
  gap: 8px;
  padding-left: 5px;
  margin-top: 3px;
}
.order {
  display: flex;
  align-items: center;
  padding-right: 9px;
  margin-top: -2px;
  font-size: 11px;
}
.order-label {
  color: #000080;
  margin-right: 5px;
}
.order-combo,
.order-spin {
  height: 21px;
  box-sizing: border-box;
  display: flex;
  align-items: center;
  background: #fff;
  border: 1px solid #888;
  padding-left: 3px;
  font-size: 11.500px;
}
.order-combo {
  width: 98px;
  justify-content: space-between;
  padding-right: 6px;
}
.order-spin {
  width: 35px;
  margin-left: 3px;
  justify-content: space-between;
  padding: 0 6px;
}
.spin-arrows {
  display: flex;
  flex-direction: column;
  gap: 3px;
}
.up {
  width: 0;
  height: 0;
  border-left: 4px solid transparent;
  border-right: 4px solid transparent;
  border-bottom: 4px solid #000;
}

/* tabs */
.tabs {
  height: 22px;
  flex: none;
  display: flex;
  align-items: flex-end;
  gap: 2px;
  padding-left: 1px;
  border-bottom: 1px solid #8a8a8a;
}
.tab {
  height: 21px;
  box-sizing: border-box;
  margin-bottom: -1px;
  display: flex;
  align-items: center;
  justify-content: center;
  border: 1px solid #8a8a8a;
  border-radius: 4px 4px 0 0;
  background: linear-gradient(#f2f2f2, #d4d4d4);
}
.tab--active {
  height: 23px;
  background: #f0f0f0;
  border-bottom-color: #f0f0f0;
  position: relative;
}

/* toolbar */
.toolbar {
  height: 28px;
  flex: none;
  display: flex;
  align-items: center;
  border-bottom: 1px solid #8a8a8a;
  box-sizing: border-box;
}
.tool-group {
  display: flex;
}
.tool {
  width: 27px;
  height: 26px;
  display: flex;
  align-items: center;
  justify-content: center;
}
.tool--on {
  background: #fbfbfb;
}
.sep {
  width: 1px;
  height: 25px;
  margin-left: 3px;
  background: #a0a0a0;
  flex: none;
}
.test-select {
  width: 206px;
  display: flex;
  align-items: center;
  padding-left: 51px;
  box-sizing: border-box;
  font-size: 11px;
}
.test-select span {
  margin-left: 0;
}
.test-select .arrow {
  margin-left: auto;
  margin-right: 4px;
}

/* scope */
.scope {
  position: relative;
  height: 506px;
  flex: none;
  background: #000;
}
.plot {
  display: block;
}
.axis {
  font-size: 9.500px;
  fill: #fff;
  font-family: "Liberation Sans", Arial, sans-serif;
}
.channel-name {
  font-size: 13.500px;
  fill: #f00000;
  font-family: "Liberation Sans", Arial, sans-serif;
}
.marker {
  font-size: 7px;
  font-weight: 700;
  fill: #fff;
  font-family: "Liberation Sans", Arial, sans-serif;
}
.readout {
  position: absolute;
  left: 649px;
  top: 37px;
  width: 696px;
  height: 231px;
  box-sizing: border-box;
  display: grid;
  grid-template-rows: repeat(3, 76.500px);
  background: #808080;
  border: 1px solid #f00000;
  border-bottom-width: 2px;
  color: #fff;
}
.readout-close {
  position: absolute;
  top: -1px;
  right: -1px;
  width: 9px;
  height: 9px;
  box-sizing: border-box;
  border: 1px solid #f00000;
}
.readout-close svg {
  display: block;
}
.reading {
  display: flex;
  justify-content: space-between;
  padding: 2px 3px 0 3px;
}
.reading-name {
  font-size: 16px;
  line-height: 20px;
}
.reading-value {
  font-size: 61px;
  font-weight: 700;
  line-height: 72px;
}

/* scroll row */
.scrollrow {
  height: 17px;
  flex: none;
  display: flex;
  background: #f0f0f0;
  padding-left: 2px;
}
.sbtn {
  display: flex;
  align-items: center;
  justify-content: center;
  height: 17px;
  box-sizing: border-box;
  background: #ececec;
  border: 1px solid;
  border-color: #fff #777 #777 #fff;
  flex: none;
}
.zoom-btn {
  width: 16px;
}
.nav-wide {
  width: 23px;
  margin-left: 2px;
}
.nav-thin {
  width: 17px;
  margin-left: 1px;
}
.nav-play {
  width: 24px;
  margin-left: 1px;
}
.combo {
  height: 17px;
  box-sizing: border-box;
  display: flex;
  align-items: center;
  justify-content: space-between;
  background: #fff;
  padding: 0 7px 0 3px;
  font-size: 12px;
  flex: none;
}
.combo--time {
  width: 69px;
}
.combo--scale {
  width: 64px;
}
.track {
  flex: none;
  width: 1090px;
  height: 17px;
  margin-left: 1px;
  background: repeating-conic-gradient(#f0f0f0 0 25%, #fdfdfd 0 50%) 0 0 / 2px 2px;
}
.thumb {
  display: block;
  width: 17px;
  height: 17px;
  margin-left: 239px;
  box-sizing: border-box;
  background: #ececec;
  border: 1px solid;
  border-color: #fff #777 #777 #fff;
}

/* bottom controls */
.controls {
  height: 88px;
  flex: none;
  box-sizing: border-box;
  border-left: 1px solid #8a8a8a;
  border-right: 1px solid #8a8a8a;
  border-bottom: 2px solid #9a9a9a;
}
.strip {
  width: 545px;
  height: 6px;
  margin-left: 409px;
  box-sizing: border-box;
  display: flex;
  align-items: center;
  gap: 3px;
  padding: 0 3px 0 4px;
  border: 1px solid #aab;
  border-top: none;
  background: #f4f4f4;
}
.strip-mark {
  width: 0;
  height: 0;
  border-left: 3px solid transparent;
  border-right: 3px solid transparent;
  border-top: 4px solid #3a90e8;
}
.strip-dots {
  flex: 1;
  height: 1px;
  background: repeating-linear-gradient(90deg, #3a70c8 0 1px, transparent 1px 3px);
}
.groups {
  display: flex;
  gap: 5px;
  margin-top: 8px;
  padding-left: 283px;
}
.group {
  height: 73px;
  box-sizing: border-box;
  border: 1px solid #bcbcbc;
  border-radius: 6px;
  flex: none;
}
.group-title {
  display: block;
  width: fit-content;
  margin: -6px 0 0 5px;
  padding: 0 1px;
  background: #f0f0f0;
  font-size: 12px;
  line-height: 14px;
  font-weight: 700;
}
.title--navy {
  color: #000080;
}
.title--gray {
  color: #808080;
}
.title--pale {
  color: #9ab4d4;
}

.group--channel {
  width: 302px;
  display: flex;
}
.channel-left {
  width: 218px;
  padding-left: 4px;
  box-sizing: border-box;
}
.channel-btns {
  display: flex;
  gap: 1px;
  margin-top: -3px;
}
.channel {
  width: 26px;
  height: 18px;
  box-sizing: border-box;
  display: flex;
  align-items: center;
  justify-content: center;
  background: linear-gradient(#e0e0e0, #aeaeae);
  border: 1px solid #1c4a72;
  border-radius: 2px;
  color: #8a8a8a;
  font-size: 12px;
}
.channel--on {
  width: 48px;
  background: linear-gradient(#ff0000, #e00000 70%, #ff3030);
  color: #000;
  font-weight: 700;
  font-size: 14px;
}
.name-row {
  display: flex;
  align-items: center;
  margin: 6px 0 0 2px;
  height: 21px;
}
.name-field {
  width: 177px;
  height: 21px;
  box-sizing: border-box;
  display: flex;
  align-items: center;
  justify-content: space-between;
  background: #fff;
  border: 1px solid #e00000;
  padding: 0 1px 0 3px;
  font-size: 12px;
}
.dots {
  width: 16px;
  height: 17px;
  background: linear-gradient(#fff, #d8d8d8);
  border: 1px solid #999;
  font-size: 6px;
  line-height: 12px;
}
.name-ico {
  margin-left: 2px;
  flex: none;
}
.channel-tools {
  display: flex;
  margin: 1px 0 0 3px;
}
.ctool {
  width: 25px;
  height: 23px;
  display: flex;
  align-items: center;
  justify-content: center;
  box-sizing: border-box;
}
.ctool--on {
  background: #fafafa;
  border: 1px solid #d4d4d4;
}
.knob {
  display: block;
  overflow: visible;
  flex: none;
}
.knob--volt {
  margin-top: 9px;
  margin-left: 0;
}
.knob-value {
  font-size: 12px;
  font-family: "Liberation Sans", Arial, sans-serif;
}
.knob-value--small {
  font-size: 11px;
}
.knob-label {
  font-size: 9.500px;
  fill: #1a1a1a;
  font-family: "Liberation Sans", Arial, sans-serif;
}

.group--freq {
  width: 105px;
}

.group--sync {
  width: 125px;
}
.sync-grid {
  display: grid;
  grid-template-columns: repeat(4, 28px);
  grid-template-rows: 24px 24px;
  margin: 4px 0 0 7px;
  row-gap: 4px;
}
.sync-cell {
  display: flex;
  align-items: center;
  justify-content: center;
}
.sync-cell--on {
  background: #fafafa;
}
.sync-combo {
  grid-column: span 2;
  width: 47px;
  height: 22px;
  align-self: center;
  box-sizing: border-box;
  margin-left: 1px;
  display: flex;
  align-items: center;
  justify-content: space-between;
  border: 1px solid #aaa;
  padding: 0 9px 0 5px;
  font-size: 12px;
}

.group--run {
  width: 175px;
}
.run-grid {
  display: grid;
  grid-template-columns: 33px 46px 46px 31px;
  grid-template-rows: 28px 28px;
  column-gap: 3px;
  row-gap: 3px;
  margin: 2px 0 0 3px;
}
.run-grid .rbtn:nth-child(2) {
  margin-left: 1px;
  width: 45px;
}
.rbtn {
  display: flex;
  align-items: center;
  justify-content: center;
  box-sizing: border-box;
  background: linear-gradient(#fff 40%, #dcdcdc);
  border: 1px solid #1c4a72;
  border-radius: 3px;
}
.rbtn--flat {
  background: #ececec;
  border-color: #b8b8b8;
}
.rbtn--red {
  border-color: #e00000;
}
.rbtn--small {
  background: linear-gradient(#fff 40%, #e4e4e4);
}
.rbtn--start {
  grid-column: span 2;
  justify-content: flex-start;
  padding-left: 9px;
  font-size: 12px;
}
.rbtn--start b {
  margin-left: 16px;
}
.rbtn--value {
  color: #008000;
  font-size: 14px;
  font-weight: 700;
  background: #fafafa;
  border-color: #1c64a8;
}

.group--timers {
  width: 68px;
  display: flex;
  flex-direction: column;
  align-items: center;
}
.group--timers .group-title {
  align-self: flex-start;
}
.tbtn {
  width: 49px;
  height: 28px;
  margin-bottom: 3px;
  box-sizing: border-box;
  display: flex;
  align-items: center;
  justify-content: space-between;
  padding: 0 6px 0 7px;
  background: linear-gradient(#fff 40%, #dcdcdc);
  border: 1px solid #888;
  border-radius: 1px;
}
.group--timers .group-title + .tbtn {
  margin-top: 2px;
}

/* status */
.status {
  height: 18px;
  flex: none;
  display: flex;
  gap: 2px;
  margin-top: 2px;
}
.status-cell {
  height: 16px;
  box-sizing: border-box;
  display: flex;
  align-items: center;
  padding-left: 4px;
  border-top: 1px solid #a0a0a0;
  border-left: 1px solid #d0d0d0;
}
.status-cell--main {
  width: 190px;
}
.status-cell--fill {
  flex: 1;
}
.status-cell--ver {
  width: 48px;
  border-left-color: #a0a0a0;
}

/* taskbar */
.taskbar {
  flex: 1;
  display: flex;
  align-items: center;
  background: linear-gradient(100deg, #10181f, #1a232c 40%, #141b22 70%, #0e1419);
  border-top: 1px solid #2a3540;
  color: #eee;
}
.orb {
  margin-left: 8px;
  flex: none;
  display: flex;
}
.grip {
  width: 9px;
  height: 30px;
  margin-left: 12px;
  flex: none;
  background: repeating-linear-gradient(0deg, #5a6470 0 1px, transparent 1px 4px),
    linear-gradient(90deg, #000, #000);
  mask: repeating-linear-gradient(90deg, #000 0 1px, transparent 1px 4px);
}
.task {
  flex: none;
  height: 38px;
  display: flex;
  align-items: center;
  justify-content: center;
  box-sizing: border-box;
}
.task--media {
  margin-left: 18px;
}
.task--folder {
  margin-left: 32px;
}
.task--btn {
  border: 1px solid #4a525a;
  border-radius: 3px;
  background: linear-gradient(#5a5f64, #2a2e33 50%, #1a1e22);
}
.task--yandex {
  width: 55px;
  margin-left: 17px;
}
.task--diamag {
  width: 58px;
  margin-left: 7px;
}
.task--active {
  background: linear-gradient(#9ea2a6, #7a7e84 50%, #4a4e54);
  border-color: #bbb;
}
.task--rar {
  width: 56px;
  margin-left: 4px;
}
.tray {
  margin-left: auto;
  display: flex;
  align-items: center;
}
.lang {
  font-size: 12px;
  margin-left: 6px;
  margin-bottom: 5px;
}
.tray-up {
  width: 0;
  height: 0;
  margin: 0 8px 0 13px;
  border-left: 4px solid transparent;
  border-right: 4px solid transparent;
  border-bottom: 4px solid #eee;
}
.tray-ico {
  width: 20px;
  height: 22px;
  margin-left: 4px;
}
.clock {
  width: 68px;
  margin-left: 9px;
  display: flex;
  flex-direction: column;
  align-items: center;
  font-size: 10.700px;
  line-height: 16px;
  color: #e8e8e8;
}
.show-desktop {
  width: 13px;
  height: 38px;
  margin-left: 6px;
  box-sizing: border-box;
  border: 1px solid #4a5a66;
  background: linear-gradient(#5a6068, #101418 50%);
}
</style>
